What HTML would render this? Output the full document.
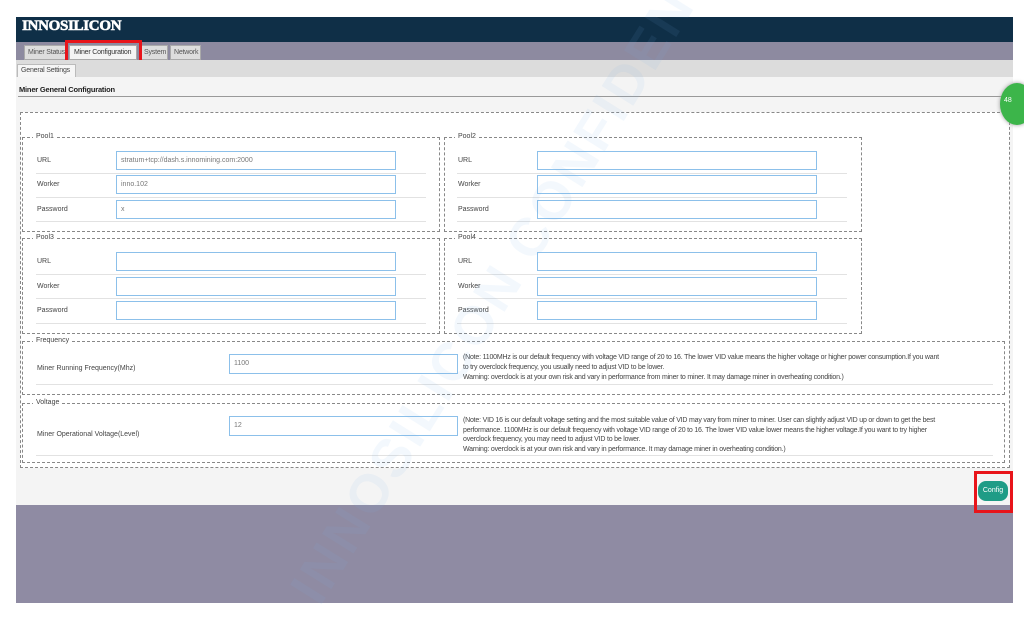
<!DOCTYPE html>
<html><head><meta charset="utf-8"><style>
*{margin:0;padding:0;box-sizing:border-box}
html,body{width:1024px;height:617px;overflow:hidden}
body{background:#fff;position:relative;font-family:"Liberation Sans",sans-serif;color:#333}
.a{position:absolute}
.t{font-size:7px;letter-spacing:-.2px;white-space:nowrap}
.box{position:absolute;border:1px dashed #888}
.leg{position:absolute;background:#fff;font-size:7px;padding:0 3px;color:#444;top:-5px;left:10px}
.in{position:absolute;border:1px solid #8cc0ea;background:#fff;height:19px;font-size:7px;color:#777;padding:5px 4px}
.ul{position:absolute;height:1px;background:#e2e2e2}
.lab{position:absolute;font-size:7px;color:#444}
</style></head><body>
<div class="a" style="left:16px;top:17px;width:997px;height:25px;background:#0f2f47"></div>
<div class="a" style="left:22px;top:18px;font-family:'Liberation Serif',serif;font-weight:bold;font-size:15px;color:#fff;letter-spacing:-.3px;-webkit-text-stroke:.6px #fff">INNOSILICON</div>
<div class="a" style="left:16px;top:42px;width:997px;height:18px;background:#8d8aa0"></div>
<div class="a t" style="left:24px;top:45px;height:15px;width:42px;background:#ddd;border:1px solid #aaa;padding:3px 3px;color:#555">Miner Status</div>
<div class="a t" style="left:69px;top:45px;height:15px;width:68px;background:#f4f4f4;border:1px solid #aaa;padding:3px 4px;color:#333">Miner Configuration</div>
<div class="a t" style="left:140px;top:45px;height:15px;width:28px;background:#ddd;border:1px solid #aaa;padding:3px 3px;color:#555">System</div>
<div class="a t" style="left:170px;top:45px;height:15px;width:31px;background:#ddd;border:1px solid #aaa;padding:3px 3px;color:#555">Network</div>
<div class="a" style="left:65px;top:40px;width:77px;height:25px;border:3px solid #e8141a"></div>
<div class="a" style="left:16px;top:60px;width:997px;height:17px;background:#dcdcdc"></div>
<div class="a t" style="left:17px;top:64px;height:13px;width:59px;background:#f6f6f6;border:1px solid #bbb;border-bottom:none;padding:2px 3px;color:#444">General Settings</div>
<div class="a" style="left:16px;top:77px;width:997px;height:428px;background:#f4f4f4"></div>
<div class="a t" style="left:19px;top:85px;font-weight:bold;font-size:7.5px;color:#222">Miner General Configuration</div>
<div class="a" style="left:18px;top:96px;width:995px;height:1px;background:#999"></div>
<div class="box" style="left:20px;top:112px;width:990px;height:356px;background:#fff"></div>
<div class="a" style="left:1000px;top:83px;width:34px;height:42px;border-radius:50%;background:#3cb54a;box-shadow:0 0 4px #999"></div>
<div class="a" style="left:1004px;top:97px;color:#fff;font-size:7px">48</div>

<div class="box" style="left:22px;top:137px;width:418px;height:95px"><span class="leg">Pool1</span></div>
<div class="box" style="left:444px;top:137px;width:418px;height:95px"><span class="leg">Pool2</span></div>
<div class="box" style="left:22px;top:238px;width:418px;height:96px"><span class="leg">Pool3</span></div>
<div class="box" style="left:444px;top:238px;width:418px;height:96px"><span class="leg">Pool4</span></div>

<div class="lab" style="left:37px;top:157px">URL</div><div class="in" style="left:116px;top:151px;width:280px">stratum+tcp://dash.s.innomining.com:2000</div><div class="ul" style="left:36px;top:173px;width:390px"></div>
<div class="lab" style="left:37px;top:181px">Worker</div><div class="in" style="left:116px;top:175px;width:280px">inno.102</div><div class="ul" style="left:36px;top:197px;width:390px"></div>
<div class="lab" style="left:37px;top:206px">Password</div><div class="in" style="left:116px;top:200px;width:280px">x</div><div class="ul" style="left:36px;top:221px;width:390px"></div>

<div class="lab" style="left:458px;top:157px">URL</div><div class="in" style="left:537px;top:151px;width:280px"></div><div class="ul" style="left:457px;top:173px;width:390px"></div>
<div class="lab" style="left:458px;top:181px">Worker</div><div class="in" style="left:537px;top:175px;width:280px"></div><div class="ul" style="left:457px;top:197px;width:390px"></div>
<div class="lab" style="left:458px;top:206px">Password</div><div class="in" style="left:537px;top:200px;width:280px"></div><div class="ul" style="left:457px;top:221px;width:390px"></div>

<div class="lab" style="left:37px;top:258px">URL</div><div class="in" style="left:116px;top:252px;width:280px"></div><div class="ul" style="left:36px;top:274px;width:390px"></div>
<div class="lab" style="left:37px;top:283px">Worker</div><div class="in" style="left:116px;top:277px;width:280px"></div><div class="ul" style="left:36px;top:298px;width:390px"></div>
<div class="lab" style="left:37px;top:307px">Password</div><div class="in" style="left:116px;top:301px;width:280px"></div><div class="ul" style="left:36px;top:323px;width:390px"></div>

<div class="lab" style="left:458px;top:258px">URL</div><div class="in" style="left:537px;top:252px;width:280px"></div><div class="ul" style="left:457px;top:274px;width:390px"></div>
<div class="lab" style="left:458px;top:283px">Worker</div><div class="in" style="left:537px;top:277px;width:280px"></div><div class="ul" style="left:457px;top:298px;width:390px"></div>
<div class="lab" style="left:458px;top:307px">Password</div><div class="in" style="left:537px;top:301px;width:280px"></div><div class="ul" style="left:457px;top:323px;width:390px"></div>

<div class="box" style="left:22px;top:341px;width:983px;height:54px"><span class="leg">Frequency</span></div>
<div class="lab" style="left:37px;top:365px">Miner Running Frequency(Mhz)</div>
<div class="in" style="left:229px;top:354px;width:229px;height:20px">1100</div>
<div class="a t" style="left:463px;top:353px;line-height:10px;color:#444">(Note: 1100MHz is our default frequency with voltage VID range of 20 to 16. The lower VID value means the higher voltage or higher power consumption.If you want<br>to try overclock frequency, you usually need to adjust VID to be lower.<br>Warning: overclock is at your own risk and vary in performance from miner to miner. It may damage miner in overheating condition.)</div>
<div class="ul" style="left:36px;top:384px;width:957px"></div>

<div class="box" style="left:22px;top:403px;width:983px;height:60px"><span class="leg">Voltage</span></div>
<div class="lab" style="left:37px;top:431px">Miner Operational Voltage(Level)</div>
<div class="in" style="left:229px;top:416px;width:229px;height:20px">12</div>
<div class="a t" style="left:463px;top:416px;line-height:9.5px;color:#444">(Note: VID 16 is our default voltage setting and the most suitable value of VID may vary from miner to miner. User can slightly adjust VID up or down to get the best<br>performance. 1100MHz is our default frequency with voltage VID range of 20 to 16. The lower VID value lower means the higher voltage.If you want to try higher<br>overclock frequency, you may need to adjust VID to be lower.<br>Warning: overclock is at your own risk and vary in performance. It may damage miner in overheating condition.)</div>
<div class="ul" style="left:36px;top:455px;width:957px"></div>

<div class="a" style="left:16px;top:505px;width:997px;height:98px;background:#8f8ba3"></div>
<div class="a" style="left:978px;top:481px;width:30px;height:20px;background:#1f9c86;border-radius:8px;color:#fff;font-size:7px;text-align:center;line-height:20px">Config</div>
<div class="a" style="left:974px;top:471px;width:39px;height:42px;border:3px solid #e8141a"></div>
<div class="a" style="left:140px;top:270px;width:700px;font-size:54px;font-weight:bold;color:rgba(120,180,230,.09);transform:rotate(-58deg);transform-origin:50% 50%;white-space:nowrap;letter-spacing:3px">INNOSILICON CONFIDENTIAL</div>
</body></html>
